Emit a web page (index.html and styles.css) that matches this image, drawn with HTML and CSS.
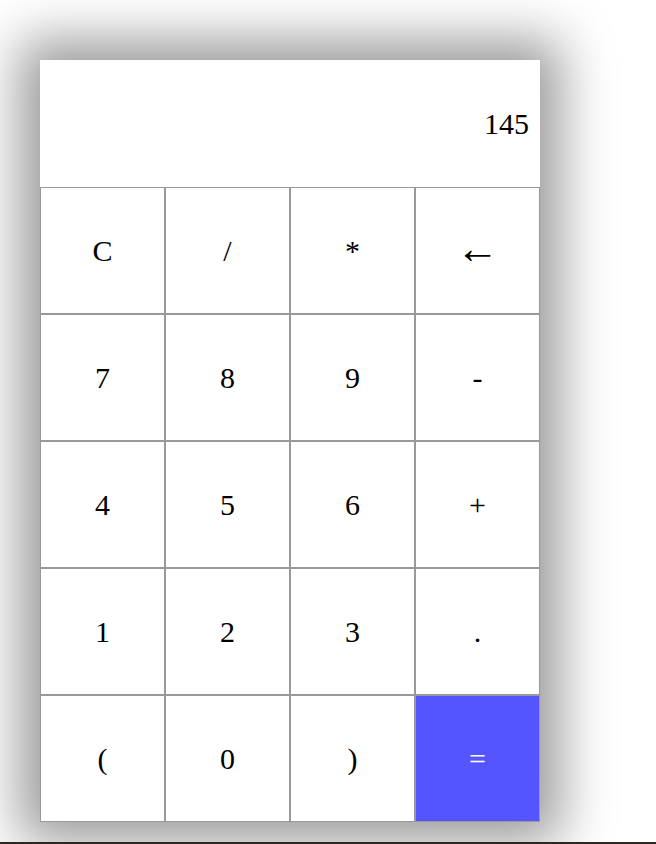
FILE: index.html
```html
<!DOCTYPE html>
<html lang="en">
<head>
<meta charset="utf-8">
<title>Calculator</title>
<link rel="stylesheet" href="styles.css">
</head>
<body>
<div class="page">
  <div class="calc">
    <div class="display">145</div>
    <div class="keys">
      <button class="key">C</button>
      <button class="key">/</button>
      <button class="key">*</button>
      <button class="key key-back">&larr;</button>
      <button class="key">7</button>
      <button class="key">8</button>
      <button class="key">9</button>
      <button class="key">-</button>
      <button class="key">4</button>
      <button class="key">5</button>
      <button class="key">6</button>
      <button class="key">+</button>
      <button class="key">1</button>
      <button class="key">2</button>
      <button class="key">3</button>
      <button class="key">.</button>
      <button class="key">(</button>
      <button class="key">0</button>
      <button class="key">)</button>
      <button class="key key-equals">=</button>
    </div>
  </div>
</div>
</body>
</html>
```

FILE: styles.css
```css
html, body {
  margin: 0;
  padding: 0;
  background: #ffffff;
}

.page {
  height: 762px;
  padding: 60px 40px 20px 40px;
  border-bottom: 2px solid #2e2620;
  overflow: hidden;
}

.calc {
  width: 500px;
  background: #ffffff;
  box-shadow: 0 0 50px 20px rgba(0, 0, 0, 0.4);
  font-family: "Liberation Serif", "Times New Roman", serif;
}

.display {
  height: 127px;
  box-sizing: border-box;
  display: flex;
  align-items: center;
  justify-content: flex-end;
  padding-right: 11px;
  font-size: 30px;
  color: #000;
}

.keys {
  display: grid;
  grid-template-columns: repeat(4, 125px);
  grid-auto-rows: 127px;
}

.key {
  margin: 0;
  padding: 0;
  border: 1px solid #999999;
  background: #ffffff;
  color: #000000;
  font-family: "Liberation Serif", "Times New Roman", serif;
  font-size: 30px;
  box-sizing: border-box;
}

.key-back {
  font-size: 43px;
  padding-bottom: 5px;
}

.key-equals {
  background: #5555ff;
  color: #ffffff;
}
```
